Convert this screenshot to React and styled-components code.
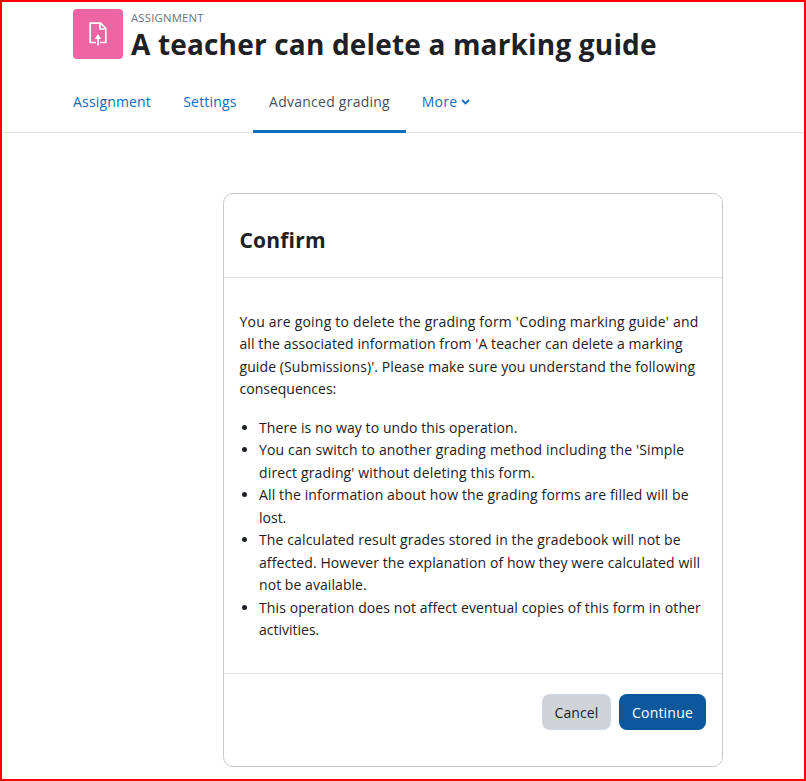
import React from 'react';
import styled, { createGlobalStyle } from 'styled-components';

const GlobalStyle = createGlobalStyle`
  * {
    box-sizing: border-box;
  }

  body {
    margin: 0;
    background-color: #ffffff;
    color: #1d2125;
    font-family: 'Open Sans', 'Noto Sans', sans-serif;
    font-size: 14px;
    line-height: 22.5px;
  }
`;

const Page = styled.div`
  width: 806px;
  height: 781px;
  border: 2px solid #ff0000;
  overflow: hidden;
`;

const Header = styled.header`
  display: flex;
  gap: 8px;
  padding: 7px 0 0 71px;
`;

const ActivityIcon = styled.div`
  display: flex;
  align-items: center;
  justify-content: center;
  width: 50px;
  height: 50px;
  border-radius: 4px;
  background-color: #eb66a2;
`;

const Heading = styled.div`
  display: flex;
  flex-direction: column;
  height: 62px;
`;

const ActivityType = styled.div`
  font-size: 11.3px;
  line-height: 17px;
  color: #6a737b;
`;

const Title = styled.h1`
  margin: 0;
  font-size: 28px;
  font-weight: 700;
  line-height: 36px;
`;

const Text = styled.span`
  letter-spacing: ${(props) => props.$track || 0}px;
  white-space: nowrap;
`;

const Tabs = styled.nav`
  display: flex;
  height: 62px;
  padding-left: 55px;
  border-bottom: 1px solid #dee2e6;
`;

const Tab = styled.a`
  display: flex;
  align-items: center;
  justify-content: center;
  gap: 4px;
  width: ${(props) => props.$width}px;
  height: 62px;
  padding-top: 3px;
  border-bottom: 3px solid ${(props) => (props.$active ? '#0f6cbf' : 'transparent')};
  color: ${(props) => (props.$active ? '#495057' : '#0f6cbf')};
  text-decoration: none;
  cursor: pointer;
`;

const Card = styled.section`
  width: 500px;
  height: 574px;
  margin: 60px 0 0 221px;
  border: 1px solid #cacaca;
  border-radius: 10px;
`;

const CardHeader = styled.div`
  display: flex;
  align-items: center;
  height: 84px;
  padding: 9px 15.5px 0;
  border-bottom: 1px solid #dee2e6;
`;

const CardTitle = styled.h4`
  margin: 0;
  font-size: 21px;
  font-weight: 700;
  line-height: 27px;
`;

const CardBody = styled.div`
  height: 395px;
  padding: 32.5px 15.5px 0;
`;

const Paragraph = styled.p`
  margin: 0 0 16px;
`;

const List = styled.ul`
  margin: 0;
  padding: 0 0 0 19.5px;
`;

const Line = styled(Text)`
  display: block;
`;

const CardFooter = styled.div`
  display: flex;
  justify-content: flex-end;
  gap: 8px;
  padding: 20px 16px 0;
  border-top: 1px solid #dee2e6;
`;

const Button = styled.button`
  width: ${(props) => props.$width}px;
  height: 36px;
  padding: 0;
  border: none;
  border-radius: 8px;
  background-color: ${(props) => (props.$primary ? '#0c589c' : '#ced4da')};
  color: ${(props) => (props.$primary ? '#ffffff' : '#1d2125')};
  font-family: inherit;
  font-size: 14px;
  cursor: pointer;
`;

const tabs = [
  { label: 'Assignment', width: 110, track: 0.15 },
  { label: 'Settings', width: 86, track: 0.2 },
  { label: 'Advanced grading', width: 153, track: 0.25, active: true },
  { label: 'More', width: 80, track: 0.2, menu: true },
];

const intro = [
  ["You are going to delete the grading form 'Coding marking guide' and", 0.21],
  ["all the associated information from 'A teacher can delete a marking", 0.09],
  ["guide (Submissions)'. Please make sure you understand the following", 0.09],
  ['consequences:', 0],
];

const consequences = [
  [['There is no way to undo this operation.', 0.09]],
  [
    ["You can switch to another grading method including the 'Simple", 0.15],
    ["direct grading' without deleting this form.", 0.14],
  ],
  [
    ['All the information about how the grading forms are filled will be', 0.13],
    ['lost.', 0],
  ],
  [
    ['The calculated result grades stored in the gradebook will not be', 0.12],
    ['affected. However the explanation of how they were calculated will', 0.09],
    ['not be available.', 0.06],
  ],
  [
    ['This operation does not affect eventual copies of this form in other', 0.1],
    ['activities.', 0],
  ],
];

const AssignmentIcon = () => (
  <svg width="18" height="24" viewBox="0 0 18 24" fill="none" stroke="#ffffff" strokeWidth="1.7">
    <path d="M7 20.5H1.2V1.2H11.5L16.8 6.5V20.5H11" />
    <path d="M11 1.2V7H16.8" />
    <path d="M9 23.5V14" />
    <path d="M5.8 17L9 12L12.2 17Z" fill="#ffffff" stroke="none" />
  </svg>
);

const Caret = () => (
  <svg width="9" height="6" viewBox="0 0 9 6" fill="none" stroke="#0f6cbf" strokeWidth="1.8">
    <path d="M1 1L4.5 4.5L8 1" />
  </svg>
);

const Lines = ({ items }) =>
  items.map(([text, track]) => (
    <Line key={text} $track={track}>
      {text}
    </Line>
  ));

const App = () => {
  return (
    <Page>
      <GlobalStyle />
      <Header>
        <ActivityIcon>
          <AssignmentIcon />
        </ActivityIcon>
        <Heading>
          <ActivityType>
            <Text $track={0.22}>ASSIGNMENT</Text>
          </ActivityType>
          <Title>
            <Text $track={0.17}>A teacher can delete a marking guide</Text>
          </Title>
        </Heading>
      </Header>
      <Tabs>
        {tabs.map((tab) => (
          <Tab key={tab.label} $width={tab.width} $active={tab.active}>
            <Text $track={tab.track}>{tab.label}</Text>
            {tab.menu && <Caret />}
          </Tab>
        ))}
      </Tabs>
      <Card>
        <CardHeader>
          <CardTitle>
            <Text $track={0.2}>Confirm</Text>
          </CardTitle>
        </CardHeader>
        <CardBody>
          <Paragraph>
            <Lines items={intro} />
          </Paragraph>
          <List>
            {consequences.map((item) => (
              <li key={item[0][0]}>
                <Lines items={item} />
              </li>
            ))}
          </List>
        </CardBody>
        <CardFooter>
          <Button $width={69}>
            <Text $track={0.1}>Cancel</Text>
          </Button>
          <Button $width={87} $primary>
            <Text $track={0.2}>Continue</Text>
          </Button>
        </CardFooter>
      </Card>
    </Page>
  );
};

export default App;
